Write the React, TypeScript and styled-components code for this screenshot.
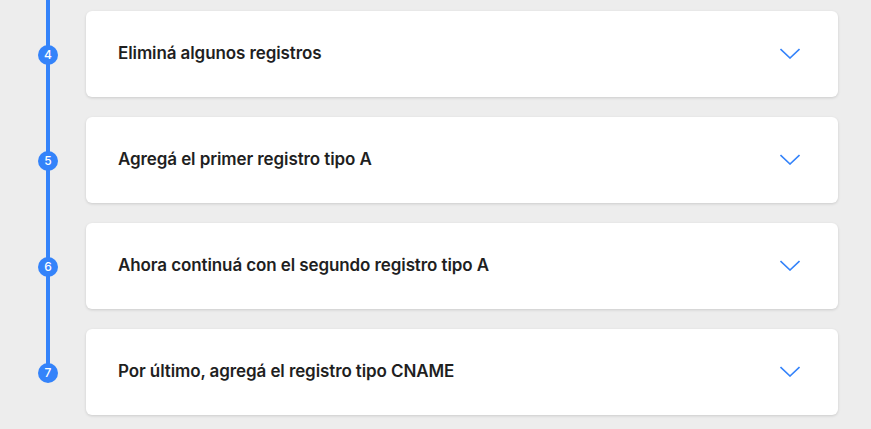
import React from 'react';
import styled, { createGlobalStyle } from 'styled-components';

const GlobalStyle = createGlobalStyle`
  html, body {
    margin: 0;
    padding: 0;
    background: #ededed;
  }
  body {
    font-family: Inter, "Noto Sans", Arial, sans-serif;
  }
`;

const Timeline = styled.div`
  position: relative;
  padding: 11px 33px 14px 0;
  display: flex;
  flex-direction: column;
  gap: 20px;

  &::before {
    content: '';
    position: absolute;
    left: 46px;
    width: 4px;
    top: 0;
    bottom: 57px;
    background: #3483fa;
  }
`;

const Row = styled.div`
  display: grid;
  grid-template-columns: 86px 1fr;
  align-items: center;
`;

const MarkerCell = styled.div`
  display: flex;
  padding-left: 38px;
  position: relative;
  z-index: 1;
`;

const Dot = styled.span`
  width: 20px;
  height: 20px;
  border-radius: 50%;
  background: #3483fa;
  color: #fff;
  font-size: 12px;
  font-weight: 500;
  display: flex;
  align-items: center;
  justify-content: center;
  margin-top: 1px;
`;

const Card = styled.div`
  height: 86px;
  background: #fff;
  border-radius: 6px;
  box-shadow: 0 1px 3px rgba(0, 0, 0, 0.14);
  display: flex;
  align-items: center;
  justify-content: space-between;
  padding: 0 38px 2px 32px;
  box-sizing: border-box;
`;

const Title = styled.span`
  font-size: 17px;
  font-weight: 600;
  color: #1f1f1f;
  letter-spacing: -0.1px;
`;

const Chevron = () => (
  <svg width="20" height="11" viewBox="0 0 20 11" fill="none">
    <path d="M0.5 1 L10 10 L19.5 1" stroke="#3483fa" strokeWidth="1.6" />
  </svg>
);

const steps = [
  { n: 4, title: 'Eliminá algunos registros' },
  { n: 5, title: 'Agregá el primer registro tipo A' },
  { n: 6, title: 'Ahora continuá con el segundo registro tipo A' },
  { n: 7, title: 'Por último, agregá el registro tipo CNAME' },
];

const App: React.FC = () => (
  <>
    <GlobalStyle />
    <Timeline>
      {steps.map((s) => (
        <Row key={s.n}>
          <MarkerCell>
            <Dot>{s.n}</Dot>
          </MarkerCell>
          <Card>
            <Title>{s.title}</Title>
            <Chevron />
          </Card>
        </Row>
      ))}
    </Timeline>
  </>
);

export default App;
